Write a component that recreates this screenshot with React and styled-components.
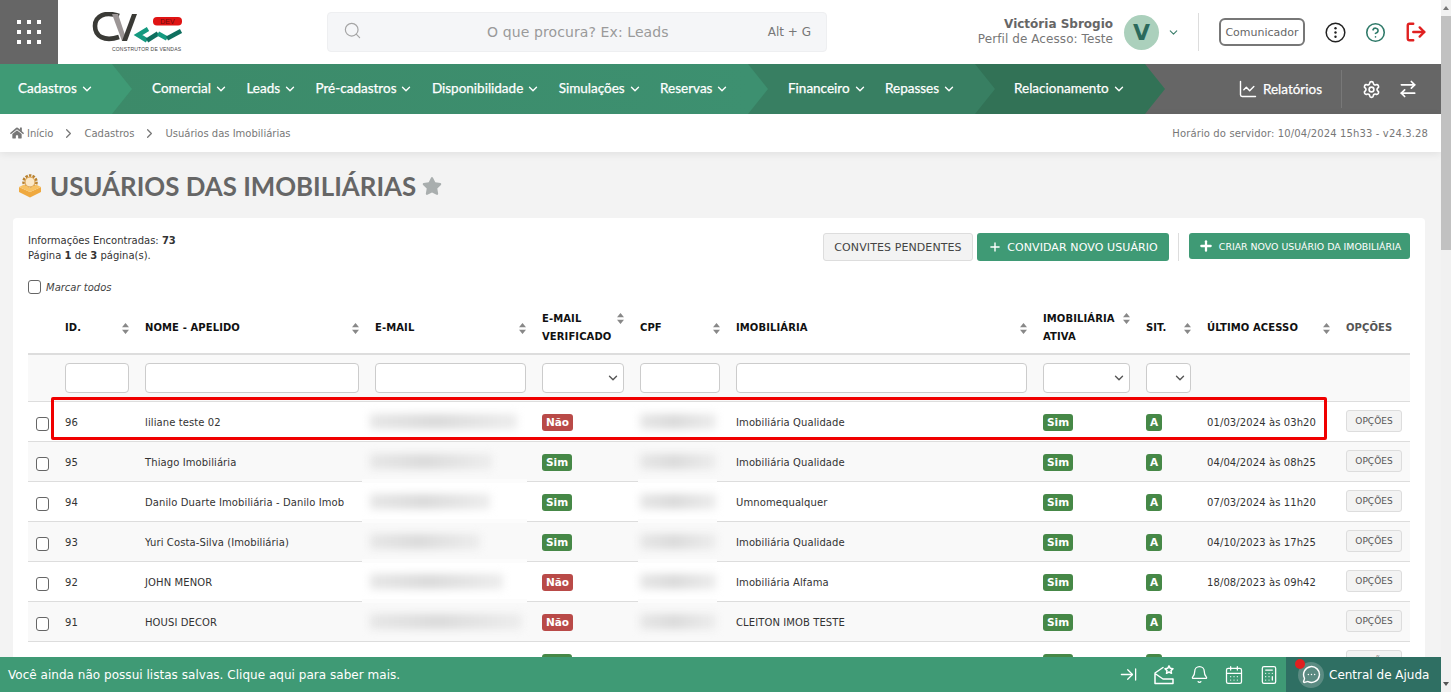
import React from "react";
import styled, { createGlobalStyle } from "styled-components";
import {
  Search,
  ChevronDown,
  ChevronRight,
  CircleHelp,
  LogOut,
  ChartLine,
  Settings,
  ArrowRightLeft,
  ArrowRightToLine,
  Bell,
  CalendarDays,
  Calculator,
  MessageCircleMore,
  Plus,
} from "lucide-react";
import { FaHome, FaStar } from "react-icons/fa";

const GlobalStyle = createGlobalStyle`
  html, body {
    margin: 0;
    padding: 0;
    height: 692px;
    overflow: hidden;
    background: #f3f3f3;
    font-family: "DejaVu Sans", Verdana, sans-serif;
    font-size: 10px;
    color: #333;
  }
  * {
    box-sizing: border-box;
  }
`;

const menus = {
  first: ["Cadastros"],
  second: ["Comercial", "Leads", "Pré-cadastros", "Disponibilidade", "Simulações", "Reservas"],
  third: ["Financeiro", "Repasses"],
  fourth: ["Relacionamento"],
};

const columns = [29, 80, 230, 167, 98, 96, 307, 103, 61, 139, 72];

const rows = [
  { id: "96", name: "liliane teste 02", mail: 147, verified: false, company: "Imobiliária Qualidade", last: "01/03/2024 às 03h20" },
  { id: "95", name: "Thiago Imobiliária", mail: 122, verified: true, company: "Imobiliária Qualidade", last: "04/04/2024 às 08h25", seam: true },
  { id: "94", name: "Danilo Duarte Imobiliária - Danilo Imob", mail: 120, verified: true, company: "Umnomequalquer", last: "07/03/2024 às 11h20", seam: true },
  { id: "93", name: "Yuri Costa-Silva (Imobiliária)", mail: 110, verified: true, company: "Imobiliária Qualidade", last: "04/10/2023 às 17h25", seam: true },
  { id: "92", name: "JOHN MENOR", mail: 133, verified: false, company: "Imobiliária Alfama", last: "18/08/2023 às 09h42", seam: true },
  { id: "91", name: "HOUSI DECOR", mail: 152, verified: false, company: "CLEITON IMOB TESTE", last: "" },
  { id: "", name: "", mail: 0, verified: true, company: "", last: "" },
];

export default function App() {
  return (
    <Page>
      <GlobalStyle />
      <Main>
        <TopBar>
          <AppsButton>
            <AppsGrid>
              {Array.from({ length: 9 }).map((_, i) => (
                <i key={i} />
              ))}
            </AppsGrid>
          </AppsButton>
          <LogoBox>
            <Logo />
          </LogoBox>
          <SearchBox>
            <SearchGlyph size={19} strokeWidth={1.5} color="#a5a5a5" />
            <SearchHint>O que procura? Ex: Leads</SearchHint>
            <SearchKey>Alt + G</SearchKey>
          </SearchBox>
          <UserInfo>
            <strong>Victória Sbrogio</strong>
            <span>Perfil de Acesso: Teste</span>
          </UserInfo>
          <Avatar>V</Avatar>
          <ChevronDown size={13} color="#3c7f6c" strokeWidth={2} />
          <TopDivider />
          <Communicator>Comunicador</Communicator>
          <TopIcons>
            <DotsCircle />
            <CircleHelp size={21} color="#2f7a69" strokeWidth={1.8} />
            <LogOut size={22} color="#e02020" strokeWidth={2.6} />
          </TopIcons>
        </TopBar>

        <NavBar>
          <Segment $width={112} $bg="#3f9a75" $layer={4} $pad={18}>
            {menus.first.map((m) => (
              <NavItem key={m}>
                {m} <ChevronDown size={14} strokeWidth={2.4} />
              </NavItem>
            ))}
          </Segment>
          <Segment $width={636} $bg="linear-gradient(90deg, #3c8a69, #3d9070)" $arrow="#3d9070" $layer={3} $pad={40}>
            {menus.second.map((m) => (
              <NavItem key={m}>
                {m} <ChevronDown size={14} strokeWidth={2.4} />
              </NavItem>
            ))}
          </Segment>
          <Segment $width={227} $bg="#387f62" $layer={2} $pad={40}>
            {menus.third.map((m) => (
              <NavItem key={m}>
                {m} <ChevronDown size={14} strokeWidth={2.4} />
              </NavItem>
            ))}
          </Segment>
          <Segment $width={170} $bg="#327256" $layer={1} $pad={39}>
            {menus.fourth.map((m) => (
              <NavItem key={m}>
                {m} <ChevronDown size={14} strokeWidth={2.4} />
              </NavItem>
            ))}
          </Segment>
          <NavTools>
            <ReportLink>
              <ChartLine size={20} strokeWidth={1.7} />
              Relatórios
            </ReportLink>
            <NavDivider />
            <Settings size={19} strokeWidth={2.1} />
            <ArrowRightLeft size={20} strokeWidth={2} />
          </NavTools>
        </NavBar>

        <Breadcrumb>
          <Trail>
            <FaHome size={14} color="#777" />
            <span>Início</span>
            <ChevronRight size={15} color="#777" />
            <span>Cadastros</span>
            <ChevronRight size={15} color="#777" />
            <span>Usuários das Imobiliárias</span>
          </Trail>
          <ServerTime>Horário do servidor: 10/04/2024 15h33 - v24.3.28</ServerTime>
        </Breadcrumb>

        <TitleRow>
          <BoxIcon />
          <Title>USUÁRIOS DAS IMOBILIÁRIAS</Title>
          <FaStar size={20} color="#a9aeae" />
        </TitleRow>

        <Panel>
          <PanelTop>
            <Info>
              Informações Encontradas: <b>73</b>
              <br />
              Página <b>1</b> de <b>3</b> página(s).
            </Info>
            <Actions>
              <GhostButton>CONVITES PENDENTES</GhostButton>
              <GreenButton>
                <Plus size={14} strokeWidth={2.4} />
                CONVIDAR NOVO USUÁRIO
              </GreenButton>
              <ActionDivider />
              <GreenButton $small>
                <Plus size={16} strokeWidth={3.4} />
                CRIAR NOVO USUÁRIO DA IMOBILIÁRIA
              </GreenButton>
            </Actions>
          </PanelTop>
          <MarkAll>
            <Check type="checkbox" />
            <em>Marcar todos</em>
          </MarkAll>

          <TableWrap>
            <Table>
              <colgroup>
                {columns.map((w, i) => (
                  <col key={i} style={{ width: w }} />
                ))}
              </colgroup>
              <thead>
                <tr>
                  <Th />
                  <HeadCell>ID.</HeadCell>
                  <HeadCell>NOME - APELIDO</HeadCell>
                  <HeadCell>E-MAIL</HeadCell>
                  <HeadCell $top>
                    E-MAIL
                    <br />
                    VERIFICADO
                  </HeadCell>
                  <HeadCell>CPF</HeadCell>
                  <HeadCell>IMOBILIÁRIA</HeadCell>
                  <HeadCell $top>
                    IMOBILIÁRIA
                    <br />
                    ATIVA
                  </HeadCell>
                  <HeadCell>SIT.</HeadCell>
                  <HeadCell>ÚLTIMO ACESSO</HeadCell>
                  <Th>OPÇÕES</Th>
                </tr>
                <FilterRow>
                  <td />
                  <td><FilterInput /></td>
                  <td><FilterInput /></td>
                  <td><FilterInput /></td>
                  <td><FilterSelect><ChevronDown size={14} strokeWidth={2.4} /></FilterSelect></td>
                  <td><FilterInput /></td>
                  <td><FilterInput /></td>
                  <td><FilterSelect><ChevronDown size={14} strokeWidth={2.4} /></FilterSelect></td>
                  <td><FilterSelect><ChevronDown size={14} strokeWidth={2.4} /></FilterSelect></td>
                  <td />
                  <td />
                </FilterRow>
              </thead>
              <tbody>
                {rows.map((r, i) => (
                  <Row key={i} $odd={i % 2 === 1}>
                    <td><RowCheck type="checkbox" /></td>
                    <td>{r.id}</td>
                    <td>{r.name}</td>
                    <BlurCell>
                      {r.seam && <Seam $left={-5} $width={165} />}
                      {r.mail > 0 && <Smudge $left={3} $width={r.mail} />}
                    </BlurCell>
                    <td>
                      {r.verified ? <Badge $ok>Sim</Badge> : <Badge>Não</Badge>}
                    </td>
                    <BlurCell>
                      {r.seam && <Seam $left={6} $width={79} />}
                      {i < 6 && <Smudge $left={8} $width={76} />}
                    </BlurCell>
                    <td>{r.company}</td>
                    <td><Badge $ok>Sim</Badge></td>
                    <td><Badge $ok>A</Badge></td>
                    <td>{r.last}</td>
                    <td><OptionsButton>OPÇÕES</OptionsButton></td>
                  </Row>
                ))}
              </tbody>
            </Table>
            <Highlight />
          </TableWrap>
        </Panel>

        <BottomBar>
          <BottomText>Você ainda não possui listas salvas. Clique aqui para saber mais.</BottomText>
          <BottomIcons>
            <ArrowRightToLine size={19} strokeWidth={1.6} />
            <MailStar />
            <Bell size={19} strokeWidth={1.6} />
            <CalendarDays size={20} strokeWidth={1.5} />
            <Calculator size={20} strokeWidth={1.5} />
          </BottomIcons>
          <HelpCenter>
            <HelpDot />
            <HelpBubble>
              <MessageCircleMore size={19} strokeWidth={1.8} />
            </HelpBubble>
            Central de Ajuda
          </HelpCenter>
        </BottomBar>
      </Main>
      <ScrollTrack>
        <ScrollUp />
        <ScrollThumb />
        <ScrollDown />
      </ScrollTrack>
    </Page>
  );
}

function Logo() {
  return (
    <LogoSvg width="92" height="42" viewBox="0 0 92 42">
      <path d="M27 4 C13 -1 3 4 3 14 C3 24 12 30 27 25" fill="none" stroke="#3a3a36" strokeWidth="4.6" />
      <path d="M20 2 L30 29 L35 29 L26 2 Z" fill="#9c9696" />
      <path d="M45 2 L35 29 L30 29 L40 2 Z" fill="#3a3a36" />
      <path d="M56 17 L46 23 L55 28.5" fill="none" stroke="#159a80" strokeWidth="4.5" />
      <path d="M55 28.5 L66 21.5" fill="none" stroke="#0f6f5f" strokeWidth="4.5" />
      <path d="M66 21.5 L75 26.5" fill="none" stroke="#159a80" strokeWidth="4.5" />
      <path d="M75 26.5 L89 19" fill="none" stroke="#0f6f5f" strokeWidth="4.5" />
      <rect x="61" y="5" width="29" height="8.5" rx="4" fill="#e01414" />
      <text x="75.5" y="11.8" textAnchor="middle" fontSize="7" fontFamily="Liberation Sans, sans-serif" fill="#6e0e0e">DEV</text>
      <text x="20" y="39" fontSize="5" fontFamily="Liberation Sans, sans-serif" textLength="69" fill="#444">CONSTRUTOR DE VENDAS</text>
    </LogoSvg>
  );
}

function DotsCircle() {
  return (
    <svg width="21" height="21" viewBox="0 0 21 21">
      <circle cx="10.5" cy="10.5" r="9.3" fill="none" stroke="#222" strokeWidth="1.5" />
      <circle cx="10.5" cy="6.2" r="1.2" fill="#222" />
      <circle cx="10.5" cy="10.5" r="1.2" fill="#222" />
      <circle cx="10.5" cy="14.8" r="1.2" fill="#222" />
    </svg>
  );
}

function BoxIcon() {
  return (
    <svg width="24" height="24" viewBox="0 0 24 24">
      <circle cx="12" cy="8" r="6.5" fill="none" stroke="#b8812f" strokeWidth="2.6" strokeDasharray="2.4 1.2" />
      <circle cx="12" cy="8" r="5" fill="#fbe8c8" stroke="#d89a42" />
      <path d="M1 13 L12 18 L23 13 L23 18 L12 23.5 L1 18 Z" fill="#efa93f" />
      <path d="M1 13 L6 10.5 L12 14 L18 10.5 L23 13 L12 18 Z" fill="#f7c163" />
    </svg>
  );
}

function MailStar() {
  return (
    <svg width="22" height="22" viewBox="0 0 22 22" fill="none" stroke="#fff" strokeWidth="1.5" strokeLinejoin="round" strokeLinecap="round">
      <path d="M2 19.5 V9 L10 3.5 M2 9.5 L10 15 L20 15 M2 19.5 H20 V15" />
      <path d="M16 1.8 L17.3 4.3 L20 4.7 L18 6.6 L18.5 9.3 L16 8 L13.5 9.3 L14 6.6 L12 4.7 L14.7 4.3 Z" />
    </svg>
  );
}

const Page = styled.div`
  display: flex;
  width: 1451px;
  height: 692px;
  overflow: hidden;
`;

const Main = styled.div`
  position: relative;
  width: 1441px;
  height: 692px;
  overflow: hidden;
`;

const TopBar = styled.header`
  display: flex;
  align-items: center;
  height: 64px;
  background: #fff;
`;

const AppsButton = styled.div`
  display: flex;
  align-items: center;
  justify-content: center;
  width: 58px;
  height: 64px;
  background: #666;
`;

const AppsGrid = styled.div`
  display: grid;
  grid-template-columns: repeat(3, 4px);
  gap: 6px;
  i {
    display: block;
    width: 4px;
    height: 4px;
    background: #fff;
  }
`;

const LogoBox = styled.div`
  width: 269px;
  padding: 2px 0 0 34px;
`;

const LogoSvg = styled.svg`
  display: block;
`;

const SearchBox = styled.div`
  display: flex;
  align-items: center;
  width: 500px;
  height: 40px;
  padding: 0 15px;
  background: #f5f6f8;
  border: 1px solid #eeeff1;
  border-radius: 4px;
`;

const SearchGlyph = styled(Search)`
  margin-top: -4px;
`;

const SearchHint = styled.span`
  flex: 1;
  padding-left: 26px;
  text-align: center;
  font-size: 14px;
  letter-spacing: 0.1px;
  color: #9a9a9a;
`;

const SearchKey = styled.span`
  font-size: 12px;
  color: #777;
`;

const UserInfo = styled.div`
  display: flex;
  flex-direction: column;
  align-items: flex-end;
  width: 286px;
  line-height: 15px;
  font-size: 12px;
  color: #777;
  strong {
    color: #666;
  }
  span {
    letter-spacing: 0.08px;
  }
`;

const Avatar = styled.div`
  display: flex;
  align-items: center;
  justify-content: center;
  width: 35px;
  height: 35px;
  margin: 0 8px 0 11px;
  border-radius: 50%;
  background: #abd0bc;
  font-size: 22px;
  font-weight: bold;
  color: #2b6a5c;
`;

const TopDivider = styled.div`
  width: 1px;
  height: 38px;
  margin: 0 20px 0 18px;
  background: #ddd;
`;

const Communicator = styled.div`
  display: flex;
  align-items: center;
  justify-content: center;
  width: 86px;
  height: 28px;
  border: 2px solid #777;
  border-radius: 6px;
  font-size: 11px;
  color: #666;
`;

const TopIcons = styled.div`
  display: flex;
  align-items: center;
  gap: 19px;
  margin-left: 20px;
`;

const NavBar = styled.nav`
  display: flex;
  height: 50px;
  background: #666;
  color: #fff;
`;

const Segment = styled.div`
  position: relative;
  z-index: ${(p) => p.$layer};
  display: flex;
  align-items: center;
  gap: 18.4px;
  width: ${(p) => p.$width}px;
  padding: 0 0 2px ${(p) => p.$pad}px;
  background: ${(p) => p.$bg};
  &::after {
    content: "";
    position: absolute;
    top: 0;
    left: 100%;
    width: 20px;
    height: 50px;
    background: ${(p) => p.$arrow || p.$bg};
    clip-path: polygon(0 0, 100% 50%, 0 100%);
  }
`;

const NavItem = styled.span`
  display: inline-flex;
  align-items: center;
  gap: 3px;
  font-family: Lato, sans-serif;
  font-size: 13.5px;
  -webkit-text-stroke: 0.25px #fff;
  white-space: nowrap;
  svg {
    margin-top: 2px;
  }
`;

const NavTools = styled.div`
  display: flex;
  flex: 1;
  align-items: center;
  justify-content: flex-end;
  gap: 17px;
  padding-right: 23px;
`;

const ReportLink = styled.span`
  display: inline-flex;
  align-items: center;
  gap: 5px;
  margin-right: 2px;
  font-family: Lato, sans-serif;
  font-size: 13.5px;
  -webkit-text-stroke: 0.25px #fff;
`;

const NavDivider = styled.div`
  width: 1px;
  height: 38px;
  margin-right: 3px;
  background: #787878;
`;

const Breadcrumb = styled.div`
  display: flex;
  align-items: center;
  justify-content: space-between;
  height: 38px;
  padding: 0 13px 0 10px;
  background: #fff;
  box-shadow: 0 2px 8px rgba(0, 0, 0, 0.08);
  font-size: 10px;
  color: #777;
`;

const Trail = styled.div`
  display: flex;
  align-items: center;
  gap: 8px;
  svg:first-child {
    margin-right: -5px;
  }
`;

const ServerTime = styled.span`
  letter-spacing: 0.13px;
`;

const TitleRow = styled.div`
  display: flex;
  align-items: center;
  height: 66px;
  padding: 1px 0 0 18px;
  gap: 6px;
`;

const Title = styled.h1`
  margin: 0 0 0 2px;
  font-family: Lato, sans-serif;
  font-size: 25.85px;
  font-weight: 700;
  color: #666;
`;

const Panel = styled.section`
  margin: 0 16px 0 13px;
  padding: 15px 15px 0;
  height: 500px;
  background: #fff;
  border-radius: 4px;
`;

const PanelTop = styled.div`
  display: flex;
  align-items: flex-start;
  justify-content: space-between;
`;

const Info = styled.div`
  font-size: 10px;
  line-height: 15px;
  color: #333;
`;

const Actions = styled.div`
  display: flex;
  align-items: flex-start;
`;

const GhostButton = styled.button`
  width: 150px;
  height: 28px;
  padding: 0;
  background: #f3f3f3;
  border: 1px solid #ddd;
  border-radius: 3px;
  font-family: inherit;
  font-size: 11px;
  letter-spacing: 0.1px;
  color: #444;
`;

const GreenButton = styled.button`
  display: flex;
  align-items: center;
  justify-content: center;
  gap: 5px;
  width: ${(p) => (p.$small ? 221 : 192)}px;
  height: ${(p) => (p.$small ? 26 : 28)}px;
  margin-left: 4px;
  padding: 0;
  background: #3f9a75;
  border: 0;
  border-radius: 3px;
  font-family: inherit;
  font-size: ${(p) => (p.$small ? 9.4 : 11)}px;
  letter-spacing: ${(p) => (p.$small ? 0 : 0.1)}px;
  color: #fff;
`;

const ActionDivider = styled.div`
  width: 1px;
  height: 28px;
  margin: 0 6px 0 9px;
  background: #ddd;
`;

const MarkAll = styled.label`
  display: flex;
  align-items: center;
  gap: 5px;
  margin-top: 17px;
  font-size: 10px;
  color: #444;
`;

const Check = styled.input`
  appearance: none;
  display: block;
  width: 13px;
  height: 14px;
  margin: 0;
  background: #fff;
  border: 1px solid #666;
  border-radius: 3px;
`;

const RowCheck = styled(Check)`
  margin-top: 4px;
`;

const TableWrap = styled.div`
  position: relative;
  margin-top: 11px;
`;

const Table = styled.table`
  width: 1382px;
  table-layout: fixed;
  border-collapse: collapse;
  font-size: 10px;
  letter-spacing: 0.1px;
  color: #333;
`;

const Th = styled.th`
  height: 49px;
  padding: 0 8px 2px;
  border-bottom: 2px solid #ddd;
  text-align: left;
  font-size: 10px;
  line-height: 18px;
  letter-spacing: 0.1px;
  color: #555;
`;

const SortCell = styled(Th)`
  color: #111;
`;

const HeadInner = styled.div`
  display: flex;
  align-items: ${(p) => (p.$top ? "flex-start" : "center")};
  justify-content: space-between;
`;

const SortMark = styled.svg`
  flex: none;
  width: 7px;
  height: 11px;
  margin-top: ${(p) => (p.$top ? 3 : 0)}px;
`;

function HeadCell({ children, $top }) {
  return (
    <SortCell>
      <HeadInner $top={$top}>
        <span>{children}</span>
        <SortMark $top={$top} viewBox="0 0 7 11">
          <path d="M3.5 0 L7 4.2 H0 Z M3.5 11 L0 6.8 H7 Z" fill="#888" />
        </SortMark>
      </HeadInner>
    </SortCell>
  );
}

const FilterRow = styled.tr`
  height: 47px;
  background: #f9f9f9;
  border-bottom: 1px solid #ddd;
  td {
    padding: 8px 8px 0;
    vertical-align: top;
  }
`;

const FilterInput = styled.input`
  display: block;
  width: 100%;
  height: 30px;
  background: #fff;
  border: 1px solid #ccc;
  border-radius: 4px;
`;

const FilterSelect = styled.div`
  display: flex;
  align-items: center;
  justify-content: flex-end;
  height: 30px;
  padding-right: 3px;
  background: #fff;
  border: 1px solid #ccc;
  border-radius: 4px;
  color: #555;
`;

const Row = styled.tr`
  height: 40px;
  background: ${(p) => (p.$odd ? "#f9f9f9" : "#fff")};
  border-bottom: 1px solid #ddd;
  td {
    padding: 2px 8px 0;
    white-space: nowrap;
  }
`;

const BlurCell = styled.td`
  position: relative;
`;

const Smudge = styled.div`
  position: absolute;
  top: 12px;
  left: ${(p) => p.$left}px;
  width: ${(p) => p.$width}px;
  height: 15px;
  background: linear-gradient(90deg, #e6e6e6, #d9d9d9 45%, #e2e2e2 70%, #ececec);
  filter: blur(4px);
`;

const Seam = styled.div`
  position: absolute;
  bottom: -2px;
  left: ${(p) => p.$left}px;
  width: ${(p) => p.$width}px;
  height: 4px;
  background: #fcfcfc;
`;

const Badge = styled.span`
  display: inline-block;
  padding: 2px 4px;
  background: ${(p) => (p.$ok ? "#468847" : "#b94a48")};
  border-radius: 3px;
  font-size: 10.5px;
  font-weight: bold;
  line-height: 13px;
  letter-spacing: 0;
  color: #fff;
`;

const OptionsButton = styled.button`
  display: block;
  width: 56px;
  height: 22px;
  margin-top: -2px;
  padding: 0;
  background: #f3f3f3;
  border: 1px solid #ddd;
  border-radius: 3px;
  font-family: inherit;
  font-size: 9px;
  color: #555;
`;

const Highlight = styled.div`
  position: absolute;
  top: 92px;
  left: 23px;
  width: 1276px;
  height: 43px;
  border: 3px solid #f00000;
  border-radius: 2px;
  pointer-events: none;
`;

const BottomBar = styled.footer`
  position: absolute;
  left: 0;
  right: 0;
  bottom: 0;
  z-index: 5;
  display: flex;
  align-items: center;
  height: 35px;
  padding-left: 8px;
  background: #3f9a75;
  color: #fff;
`;

const BottomText = styled.span`
  flex: 1;
  font-size: 12px;
  letter-spacing: 0.03px;
`;

const BottomIcons = styled.div`
  display: flex;
  align-items: center;
  gap: 15px;
  padding-right: 7px;
`;

const HelpCenter = styled.div`
  position: relative;
  display: flex;
  align-items: center;
  gap: 5px;
  width: 155px;
  height: 35px;
  padding-left: 12px;
  background: #2f6f63;
  font-size: 12px;
`;

const HelpBubble = styled.div`
  display: flex;
  align-items: center;
  justify-content: center;
  width: 26px;
  height: 26px;
  border-radius: 50%;
  background: #5b8b82;
`;

const HelpDot = styled.span`
  position: absolute;
  top: 2px;
  left: 9px;
  width: 10px;
  height: 10px;
  border-radius: 50%;
  background: #e02020;
`;

const ScrollTrack = styled.div`
  display: flex;
  flex-direction: column;
  width: 10px;
  height: 692px;
  background: #f1f1f1;
`;

const ScrollUp = styled.div`
  height: 16px;
  &::before {
    content: "";
    display: block;
    width: 0;
    margin: 6px 0 0 2px;
    border: 3px solid transparent;
    border-top: 0;
    border-bottom: 4px solid #777;
  }
`;

const ScrollThumb = styled.div`
  height: 234px;
  background: #c1c1c1;
`;

const ScrollDown = styled.div`
  margin-top: auto;
  height: 16px;
  &::before {
    content: "";
    display: block;
    width: 0;
    margin: 6px 0 0 2px;
    border: 3px solid transparent;
    border-bottom: 0;
    border-top: 4px solid #555;
  }
`;
